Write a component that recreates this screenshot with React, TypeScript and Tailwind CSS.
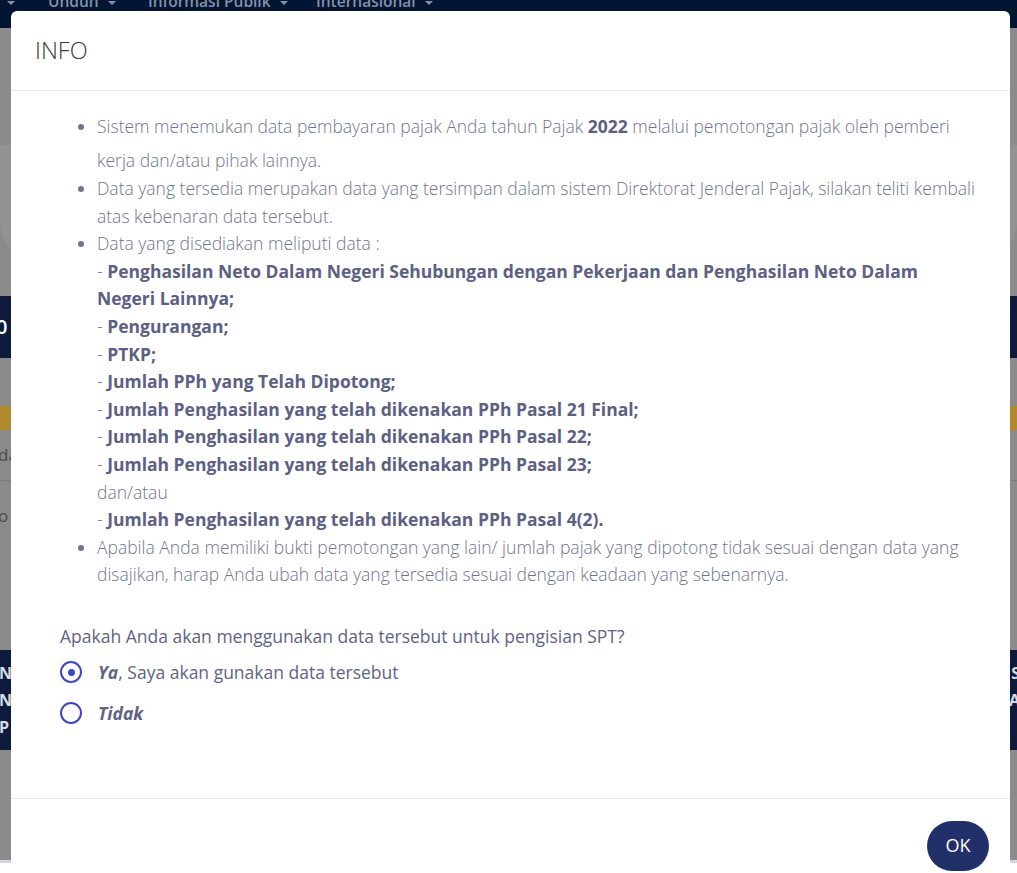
import React from 'react';

function Caret() {
  return (
    <span className="ml-[9px] inline-block h-0 w-0 border-x-[4px] border-t-[4px] border-x-transparent border-t-[#8792a6] align-middle" />
  );
}

// halaman di belakang modal (sudah diredupkan oleh backdrop)
function BackgroundPage() {
  return (
    <div className="flex flex-col bg-[#8b8b8b] font-['Open_Sans',sans-serif]">
      <div className="h-[28px] overflow-hidden bg-[#021533]">
        <div className="-mt-[12px] flex h-[28px] items-center whitespace-nowrap text-[15.5px] font-semibold text-[#8792a6]">
          <span className="-ml-[2px] w-[50px]">
            <Caret />
          </span>
          <span className="w-[100px]">
            Unduh
            <Caret />
          </span>
          <span className="w-[168px]">
            Informasi Publik
            <Caret />
          </span>
          <span>
            Internasional
            <Caret />
          </span>
        </div>
      </div>
      <div className="h-[117px]" />
      <div className="h-[117px] rounded-b-[40px] bg-[#929292]" />
      <div className="h-[34px]" />
      <div className="flex h-[62px] items-center bg-[#0e1a3c] text-[20px] font-semibold text-white">
        <span className="-ml-[4px]">0</span>
      </div>
      <div className="h-[48px]" />
      <div className="h-[24px] bg-[#b08a2c]" />
      <div className="flex h-[50px] items-center text-[17px] text-[#4a4a4a]">
        <span className="-ml-[2px]">da</span>
      </div>
      <div className="h-px bg-[#7c7c7c]" />
      <div className="flex h-[70px] items-center text-[17px] text-[#4a4a4a]">
        <span className="-ml-[2px]">o</span>
      </div>
      <div className="h-[99px]" />
      <div className="flex h-[100px] flex-col justify-center bg-[#0e1a3c] text-[16px] font-bold leading-[27px] text-[#d8dae2]">
        <div className="flex justify-between">
          <span className="-ml-[1px]">N</span>
          <span className="-mr-[3px]">S</span>
        </div>
        <div className="flex justify-between">
          <span className="-ml-[1px]">N</span>
          <span className="-mr-[3px]">A</span>
        </div>
        <div className="flex justify-between">
          <span className="-ml-[1px]">P</span>
          <span />
        </div>
      </div>
      <div className="h-[110px]" />
      <div className="h-[3px] bg-[#d4d1ea]" />
    </div>
  );
}

function Radio({ checked }: { checked?: boolean }) {
  return (
    <span className="flex h-[22px] w-[22px] shrink-0 items-center justify-center rounded-full border-2 border-[#3f47c8] bg-white">
      {checked && <span className="h-[7px] w-[7px] rounded-full bg-[#3f47c8]" />}
    </span>
  );
}

const rincian = [
  'Pengurangan;',
  'PTKP;',
  'Jumlah PPh yang Telah Dipotong;',
  'Jumlah Penghasilan yang telah dikenakan PPh Pasal 21 Final;',
  'Jumlah Penghasilan yang telah dikenakan PPh Pasal 22;',
  'Jumlah Penghasilan yang telah dikenakan PPh Pasal 23;',
];

export default function App() {
  return (
    <div className="relative h-[873px] w-full overflow-hidden">
      <BackgroundPage />

      {/* modal INFO */}
      <div className="absolute left-[11px] right-[7px] top-[11px] rounded-t-[6px] bg-white font-['Open_Sans',sans-serif]">
        <div className="flex h-[80px] items-center border-b border-[#e9ecef] px-[24px]">
          <h2 className="text-[23.5px] font-light leading-none text-[#3a3a3a]">INFO</h2>
        </div>

        <div className="pb-[71px] pl-[49px] pr-[34px] pt-[14px]">
          <ul className="list-disc pl-[37px] text-[17.5px] font-light leading-[27.6px] text-[#70758f] marker:text-[#70758f]">
            <li>
              Sistem menemukan data pembayaran pajak Anda tahun Pajak{' '}
              <strong className="font-bold leading-[42.4px] text-[#5b6084]">2022</strong> melalui pemotongan
              pajak oleh pemberi kerja dan/atau pihak lainnya.
            </li>
            <li>
              Data yang tersedia merupakan data yang tersimpan dalam sistem Direktorat Jenderal Pajak, silakan
              teliti kembali atas kebenaran data tersebut.
            </li>
            <li>
              Data yang disediakan meliputi data :
              <br />-{' '}
              <strong className="font-bold text-[#5b6084]">
                Penghasilan Neto Dalam Negeri Sehubungan dengan Pekerjaan dan Penghasilan Neto Dalam Negeri
                Lainnya;
              </strong>
              {rincian.map((r) => (
                <React.Fragment key={r}>
                  <br />- <strong className="font-bold text-[#5b6084]">{r}</strong>
                </React.Fragment>
              ))}
              <br />
              dan/atau
              <br />- <strong className="font-bold text-[#5b6084]">Jumlah Penghasilan yang telah dikenakan PPh Pasal 4(2).</strong>
            </li>
            <li>
              Apabila Anda memiliki bukti pemotongan yang lain/ jumlah pajak yang dipotong tidak sesuai dengan
              data yang disajikan, harap Anda ubah data yang tersedia sesuai dengan keadaan yang sebenarnya.
            </li>
          </ul>

          <p className="mt-[34px] text-[17.5px] leading-[27px] text-[#5e6385]">
            Apakah Anda akan menggunakan data tersebut untuk pengisian SPT?
          </p>
          <div className="mt-[9px] flex flex-col gap-[14px] text-[17.5px] leading-[27px] text-[#5e6385]">
            <label className="flex items-center gap-[16px]">
              <Radio checked />
              <span>
                <em className="font-bold">Ya</em>, Saya akan gunakan data tersebut
              </span>
            </label>
            <label className="flex items-center gap-[16px]">
              <Radio />
              <em className="font-bold">Tidak</em>
            </label>
          </div>
        </div>

        <div className="flex justify-end border-t border-[#e9ecef] pb-[20px] pr-[21px] pt-[22px]">
          <button className="h-[50px] w-[62px] rounded-full bg-[#22306a] text-[18px] text-white">OK</button>
        </div>
      </div>
    </div>
  );
}
